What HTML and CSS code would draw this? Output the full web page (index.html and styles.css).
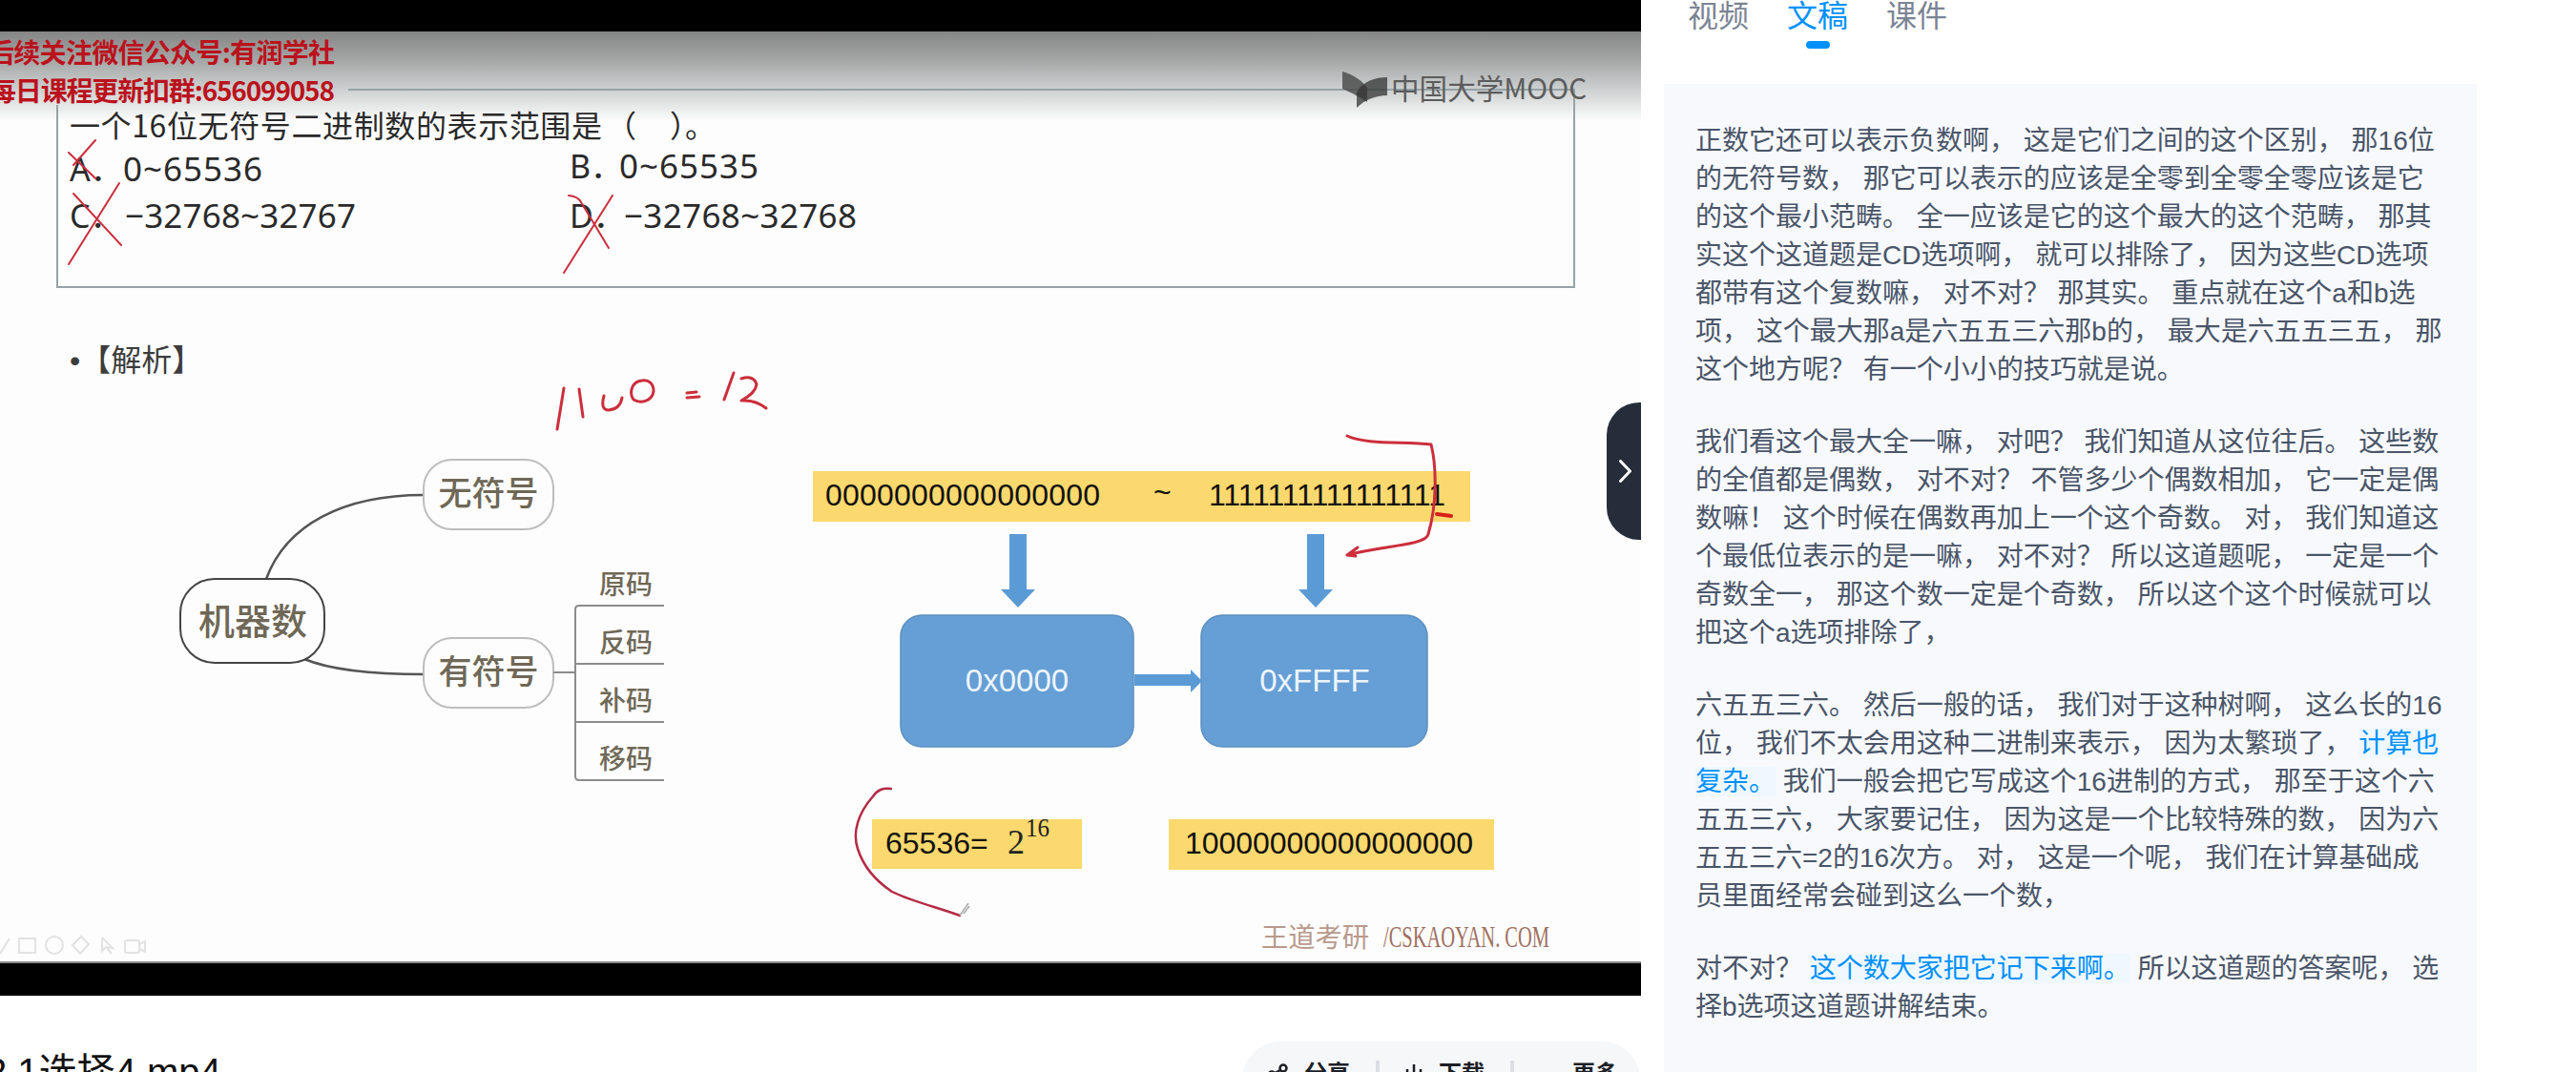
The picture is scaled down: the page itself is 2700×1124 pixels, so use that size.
FILE: index.html
```html
<!DOCTYPE html>
<html lang="zh-CN">
<head>
  <meta charset="UTF-8" />
  <title>2.1选择4.mp4</title>
  <link rel="stylesheet" href="styles.css">
</head>
<body>
  <div id="page">
    <div id="main">
      <div id="video">
        <div id="slide">
          <svg class="slide-art" viewBox="0 33 1720 977" width="1720" height="977">
            <!-- question box -->
            <path class="q-box" d="M365 94H1650V301H60V110" />
            <text class="wm" x="-13" y="66" textLength="364">后续关注微信公众号:有润学社</text>
            <text class="wm" x="-11" y="106" textLength="362">每日课程更新扣群:656099058</text>

            <!-- mooc logo -->
            <path class="logo-a" d="M1407 75C1420 79 1428 85 1433 92V107C1426 102 1416 97 1407 93Z" />
            <path class="logo-b" d="M1454 81C1442 81 1428 85 1422 97V113C1430 105 1442 100 1454 100Z" />
            <text class="logo-text" x="1458" y="104" textLength="205" lengthAdjust="spacingAndGlyphs">中国大学MOOC</text>

            <text class="q-title" x="73" y="144" textLength="558">一个16位无符号二进制数的表示范围是</text>
            <text class="q-title" x="635" y="144">（</text>
            <text class="q-title" x="702" y="144">）。</text>
            <text class="q-opt" x="73" y="190">A．</text>
            <text class="q-num" x="129" y="190" textLength="146">0~65536</text>
            <text class="q-opt" x="597" y="187">B．</text>
            <text class="q-num" x="649" y="187" textLength="146">0~65535</text>
            <text class="q-opt" x="73" y="239">C．</text>
            <text class="q-num" x="131" y="239" textLength="242">−32768~32767</text>
            <text class="q-opt" x="597" y="239">D．</text>
            <text class="q-num" x="654" y="239" textLength="244">−32768~32768</text>

            <!-- crosses -->
            <path class="pen" d="M100 147L77 173M72 160L100 187" />
            <path class="pen" d="M125 192L72 277M77 203L127 257" />
            <path class="pen" d="M642 205L591 286M596 205Q606 206 609 212L638 260" />

            <text class="jiexi" x="73" y="389">•【解析】</text>

            <!-- handwritten 1100 = 12 -->
            <path class="pen thick" d="M591 407L584 450M607 408L611 437M633 415Q629 430 638 430Q650 429 652 417M673 399C662 400 659 412 664 419C672 424 684 420 685 410C685 402 680 398 673 399ZM720 412L730 411M720 417L733 416M769 391L759 419M777 397Q790 393 793 403Q792 412 777 420Q792 419 803 428" />

            <!-- mind map -->
            <path class="map-line" d="M279 607C300 550 360 519 444 519" />
            <path class="map-line" d="M319 691C350 704 400 707 444 707" />
            <rect class="node-root" x="189" y="607" width="151" height="88" rx="36" />
            <rect class="node" x="444" y="482" width="136" height="73" rx="30" />
            <rect class="node" x="444" y="669" width="136" height="73" rx="30" />
            <text class="map-root" x="265" y="665">机器数</text>
            <text class="map-mid" x="512" y="530">无符号</text>
            <text class="map-mid" x="512" y="717">有符号</text>
            <path class="bracket" d="M580 705H603M696 635H607Q603 635 603 639V814Q603 818 607 818H696M603 696H696M603 757H696" />
            <text class="map-leaf" x="656" y="623">原码</text>
            <text class="map-leaf" x="656" y="684">反码</text>
            <text class="map-leaf" x="656" y="745">补码</text>
            <text class="map-leaf" x="656" y="806">移码</text>

            <!-- binary range -->
            <rect class="yellow" x="852" y="494" width="689" height="53" />
            <text class="bin" x="865" y="530" textLength="288">0000000000000000</text>
            <text class="bin" x="1209" y="527">~</text>
            <text class="bin" x="1267" y="530" textLength="248">1111111111111111</text>
            <path class="arrow" d="M1058 560H1076V618H1085L1067 637L1049 618H1058Z" />
            <path class="arrow" d="M1370 560H1388V618H1397L1379 637L1361 618H1370Z" />
            <rect class="blue" x="944" y="645" width="244" height="138" rx="22" />
            <rect class="blue" x="1259" y="645" width="237" height="138" rx="22" />
            <text class="hex" x="1066" y="725">0x0000</text>
            <text class="hex" x="1378" y="725">0xFFFF</text>
            <path class="arrow" d="M1189 707H1248V702L1260 714L1248 726V719H1189Z" />

            <rect class="yellow" x="914" y="859" width="220" height="52" />
            <rect class="yellow" x="1225" y="859" width="341" height="53" />
            <text class="bin" x="928" y="895">65536=</text>
            <text class="pow" x="1056" y="895">2</text>
            <text class="pow-sup" x="1075" y="877" textLength="25" lengthAdjust="spacingAndGlyphs">16</text>
            <text class="bin" x="1242" y="895" textLength="302">10000000000000000</text>

            <!-- red pen over the range -->
            <path class="pen thick" d="M1412 457C1430 466 1470 463 1500 466C1506 490 1506 530 1497 560C1495 572 1450 572 1412 582M1412 582L1423 574M1412 582L1421 583" />
            <path class="pen dash" d="M1506 539L1521 541" />
            <path class="pen dark" d="M934 827C925 826 920 828 915 835C900 852 893 872 899 890C906 912 920 925 935 935C955 945 985 952 1006 960" />
            <path class="cursor" d="M1006 960L1015 947M1010 958L1016 950" />

            <text class="brand-cn" x="1322" y="993" textLength="113" lengthAdjust="spacingAndGlyphs">王道考研</text>
            <text class="brand-en" x="1450" y="993" textLength="174" lengthAdjust="spacingAndGlyphs">/CSKAOYAN. COM</text>

            <!-- faded pen toolbar -->
            <g class="tools">
              <path d="M0 1000L10 984" />
              <rect x="20" y="984" width="17" height="15" />
              <circle cx="57" cy="991" r="9" />
              <path d="M85 982L93 990L84 1000L76 991Z" />
              <path d="M107 983V997L111 993L117 1000M107 983L118 994L111 993" />
              <rect x="131" y="986" width="15" height="13" rx="2" />
              <path d="M146 990L152 987V998L146 995" />
            </g>
          </svg>
        </div>
        <div class="handle">
          <svg viewBox="0 0 13 24" width="13" height="24">
            <path class="handle-icon" d="M1.500 1.500L11.500 12L1.500 22.500" />
          </svg>
        </div>
      </div>

      <div id="below">
        <h1 class="title">2.1选择4.mp4</h1>
        <div class="actions">
          <div class="action action-share">
            <svg class="action-icon" viewBox="0 0 22 22" width="22" height="22">
              <circle cx="17" cy="5" r="3.500" />
              <circle cx="5" cy="12" r="3.500" />
              <circle cx="17" cy="19" r="3.500" />
              <path d="M8 10L14 7M8 14L14 17" />
            </svg>
            <span>分享</span>
          </div>
          <div class="action-sep"></div>
          <div class="action action-down">
            <svg class="action-icon" viewBox="0 0 18 22" width="18" height="22">
              <path d="M9 1V15M2 6V15M16 6V15M2 20H16" />
            </svg>
            <span>下载</span>
          </div>
          <div class="action-sep"></div>
          <div class="action action-more">
            <svg class="action-icon" viewBox="0 0 20 22" width="20" height="22">
              <circle class="dot" cx="2" cy="11" r="2" />
              <circle class="dot" cx="10" cy="11" r="2" />
              <circle class="dot" cx="18" cy="11" r="2" />
            </svg>
            <span>更多</span>
          </div>
        </div>
      </div>
    </div>

    <div id="side">
      <div class="tabs">
        <div class="tab">视频</div>
        <div class="tab active">文稿</div>
        <div class="tab">课件</div>
      </div>
      <div class="transcript">
        <p>正数它还可以表示负数啊， 这是它们之间的这个区别， 那16位<br>的无符号数， 那它可以表示的应该是全零到全零全零应该是它<br>的这个最小范畴。 全一应该是它的这个最大的这个范畴， 那其<br>实这个这道题是CD选项啊， 就可以排除了， 因为这些CD选项<br>都带有这个复数嘛， 对不对？ 那其实。 重点就在这个a和b选<br>项， 这个最大那a是六五五三六那b的， 最大是六五五三五， 那<br>这个地方呢？ 有一个小小的技巧就是说。</p>
        <p>我们看这个最大全一嘛， 对吧？ 我们知道从这位往后。 这些数<br>的全值都是偶数， 对不对？ 不管多少个偶数相加， 它一定是偶<br>数嘛！ 这个时候在偶数再加上一个这个奇数。 对， 我们知道这<br>个最低位表示的是一嘛， 对不对？ 所以这道题呢， 一定是一个<br>奇数全一， 那这个数一定是个奇数， 所以这个这个时候就可以<br>把这个a选项排除了，</p>
        <p>六五五三六。 然后一般的话， 我们对于这种树啊， 这么长的16<br>位， 我们不太会用这种二进制来表示， 因为太繁琐了， <span class="mark">计算也<br>复杂。</span> 我们一般会把它写成这个16进制的方式， 那至于这个六<br>五五三六， 大家要记住， 因为这是一个比较特殊的数， 因为六<br>五五三六=2的16次方。 对， 这是一个呢， 我们在计算基础成<br>员里面经常会碰到这么一个数，</p>
        <p>对不对？ <span class="mark">这个数大家把它记下来啊。</span> 所以这道题的答案呢， 选<br>择b选项这道题讲解结束。</p>
      </div>
    </div>
  </div>
</body>
</html>
```

FILE: styles.css
```css
body {
  margin: 0;
  background-color: #fff;
  font-family: "Liberation Sans", "Noto Sans CJK SC", sans-serif;
  color: #111;
}

#page {
  display: flex;
  width: 2700px;
  height: 1124px;
  overflow: hidden;
}

#main {
  width: 1720px;
  flex-shrink: 0;
}

#video {
  position: relative;
  height: 1044px;
  box-sizing: border-box;
  padding: 33px 0 34px;
  background-color: #000;
}

#slide {
  height: 977px;
  background: linear-gradient(#858585 0, #a5a7a7 30px, #cfd2d2 62px, #e6e7e7 78px, #fdfdfd 94px);
  box-shadow: inset 0 -2px 0 #8a8a8a;
}

.slide-art {
  display: block;
}

.slide-art text {
  font-family: "Noto Sans CJK SC", sans-serif;
}

.q-box {
  fill: none;
  stroke: #95a3a6;
  stroke-width: 2;
}

.slide-art .wm {
  font-size: 28px;
  font-weight: 700;
  fill: #bb121c;
}

.logo-a {
  fill: #4d4d4d;
  opacity: 0.85;
}

.logo-b {
  fill: #333;
  opacity: 0.75;
}

.slide-art .logo-text {
  font-size: 30px;
  fill: #5c5c5c;
}

.slide-art .q-title {
  font-size: 32px;
  fill: #2a2a2a;
}

.slide-art .q-opt {
  font-family: "Noto Sans", "Noto Sans CJK SC", sans-serif;
  font-size: 34px;
  fill: #2a2a2a;
}

.slide-art .q-num {
  font-family: "Noto Sans", sans-serif;
  font-size: 35px;
  fill: #2a2a2a;
}

.pen {
  fill: none;
  stroke: #cc2e3c;
  stroke-width: 2;
  stroke-linecap: round;
  stroke-linejoin: round;
}

.thick {
  stroke-width: 3;
}

.dash {
  stroke: #d81e1e;
  stroke-width: 4;
}

.dark {
  stroke: #b52a45;
  stroke-width: 2.500;
}

.cursor {
  fill: none;
  stroke: #aaa;
  stroke-width: 1.500;
}

.slide-art .jiexi {
  font-family: "Liberation Sans", "Noto Sans CJK SC", sans-serif;
  font-size: 32px;
  fill: #3c3c3c;
}

.map-line {
  fill: none;
  stroke: #555;
  stroke-width: 2.500;
}

.node-root {
  fill: #fdfdfd;
  stroke: #444;
  stroke-width: 2;
}

.node {
  fill: #fdfdfd;
  stroke: #bdbdbd;
  stroke-width: 2;
}

.bracket {
  fill: none;
  stroke: #8c8c8c;
  stroke-width: 2;
}

.slide-art .map-root,
.slide-art .map-mid,
.slide-art .map-leaf {
  text-anchor: middle;
  font-weight: 500;
  fill: #6f6857;
}

.slide-art .map-root {
  font-size: 38px;
}

.slide-art .map-mid {
  font-size: 35px;
}

.slide-art .map-leaf {
  font-size: 28px;
}

.yellow {
  fill: #fbd96e;
}

.slide-art .bin {
  font-family: "Liberation Sans", sans-serif;
  font-size: 32px;
  fill: #111;
}

.arrow {
  fill: #5b9bd5;
}

.blue {
  fill: #659fd6;
  stroke: #5d90bf;
  stroke-width: 1.500;
}

.slide-art .hex {
  font-family: "Liberation Sans", sans-serif;
  font-size: 33px;
  text-anchor: middle;
  fill: #eef5fb;
}

.slide-art .pow,
.slide-art .pow-sup {
  font-family: "Liberation Serif", serif;
  fill: #222;
}

.slide-art .pow {
  font-size: 36px;
}

.slide-art .pow-sup {
  font-size: 28px;
}

.slide-art .brand-cn {
  font-size: 28px;
  fill: #b89a8c;
}

.slide-art .brand-en {
  font-family: "Liberation Serif", serif;
  font-size: 32px;
  fill: #a0705f;
}

.tools {
  fill: none;
  stroke: #e2e2e2;
  stroke-width: 2;
}

.handle {
  position: absolute;
  top: 422px;
  right: 0;
  width: 36px;
  height: 144px;
  display: flex;
  align-items: center;
  justify-content: center;
  padding-left: 3px;
  box-sizing: border-box;
  background-color: #252c3a;
  border-radius: 34px 0 0 34px;
}

.handle-icon {
  fill: none;
  stroke: #fff;
  stroke-width: 3;
  stroke-linecap: round;
  stroke-linejoin: round;
}

#below {
  display: flex;
  justify-content: space-between;
  align-items: flex-start;
  padding-right: 1px;
}

.title {
  margin: 56px 0 0 -15px;
  font-size: 40px;
  font-weight: 400;
  line-height: 48px;
  white-space: nowrap;
}

.actions {
  display: flex;
  align-items: flex-start;
  width: 417px;
  height: 80px;
  margin-top: 48px;
  box-sizing: border-box;
  padding-top: 18px;
  background-color: #f6f7f9;
  border-radius: 40px;
}

.action {
  display: flex;
  align-items: center;
  gap: 17px;
  box-sizing: border-box;
  font-size: 24px;
  font-weight: 700;
  line-height: 32px;
  color: #1c1f26;
}

.action-share {
  width: 140px;
  padding-left: 26px;
}

.action-down {
  width: 137px;
  padding-left: 27px;
}

.action-more {
  padding-left: 25px;
  gap: 16px;
}

.action-sep {
  width: 4px;
  height: 32px;
  margin-top: 2px;
  background-color: #dcdfe5;
}

.action-icon {
  fill: none;
  stroke: #1c1f26;
  stroke-width: 2.500;
}

.action-icon .dot {
  fill: #1c1f26;
  stroke: none;
}

#side {
  width: 852px;
  margin-left: 24px;
  flex-shrink: 0;
}

.tabs {
  display: flex;
  gap: 40px;
  height: 88px;
  box-sizing: border-box;
  padding-left: 25px;
}

.tab {
  font-size: 32px;
  line-height: 34px;
  color: #7b8494;
}

.tab.active {
  color: #0091ff;
}

.tab.active::after {
  content: "";
  display: block;
  width: 25px;
  height: 8px;
  margin: 9px auto 0;
  background-color: #0091ff;
  border-radius: 4px;
}

.transcript {
  height: 1036px;
  box-sizing: border-box;
  padding: 40px 0 0 33px;
  background-color: #f7f9fd;
  font-size: 28px;
  line-height: 40px;
  color: #4a5568;
  white-space: nowrap;
}

.transcript p {
  margin: 0 0 36px;
}

.mark {
  color: #0091ff;
  background-color: #f0f8ff;
}
```
